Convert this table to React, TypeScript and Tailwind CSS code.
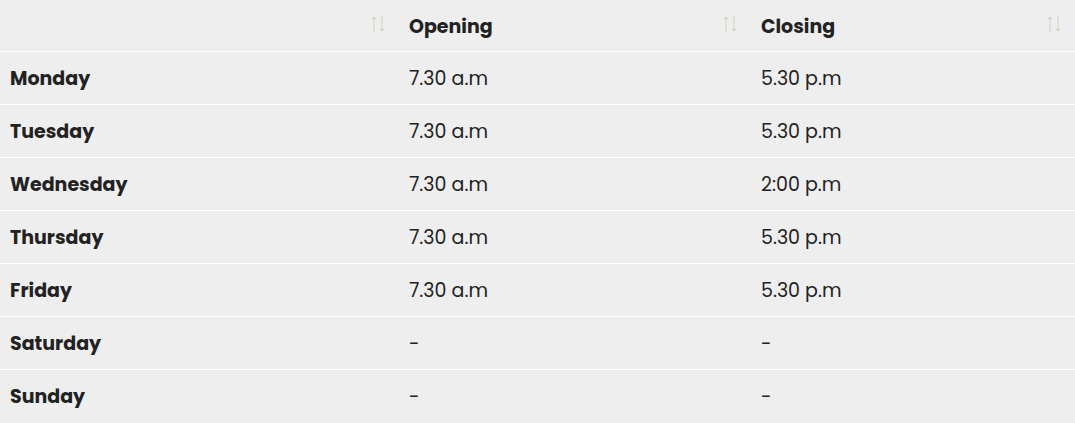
const rows = [
  { day: 'Monday', open: '7.30 a.m', close: '5.30 p.m' },
  { day: 'Tuesday', open: '7.30 a.m', close: '5.30 p.m' },
  { day: 'Wednesday', open: '7.30 a.m', close: '2:00 p.m' },
  { day: 'Thursday', open: '7.30 a.m', close: '5.30 p.m' },
  { day: 'Friday', open: '7.30 a.m', close: '5.30 p.m' },
  { day: 'Saturday', open: '-', close: '-' },
  { day: 'Sunday', open: '-', close: '-' },
];

// sort arrows in the header cells
function SortIcon() {
  return (
    <svg width="16" height="18" viewBox="0 0 16 18" fill="none" className="shrink-0 -mt-[6px]">
      <path d="M4 17V2M1.5 4.5L4 2l2.5 2.5" stroke="#d8d6c8" strokeWidth="1.2" />
      <path d="M12 1v15M9.5 13.5L12 16l2.5-2.5" stroke="#d8d6c8" strokeWidth="1.2" />
    </svg>
  );
}

function HeadCell({ label }: { label: string }) {
  return (
    <th className="h-[51px] px-[10px] pt-[3px] text-left font-bold">
      <div className="flex items-center justify-between pr-[3px]">
        <span>{label}</span>
        <SortIcon />
      </div>
    </th>
  );
}

export default function App() {
  return (
    <div className="w-[1075px] h-[423px] bg-[#eeeeee] text-[#222222] font-['Poppins','Open_Sans',sans-serif] text-[19px]">
      <table className="w-full table-fixed border-collapse">
        <colgroup>
          <col className="w-[399px]" />
          <col className="w-[352px]" />
          <col />
        </colgroup>
        <thead>
          <tr className="border-b border-white">
            <HeadCell label="" />
            <HeadCell label="Opening" />
            <HeadCell label="Closing" />
          </tr>
        </thead>
        <tbody>
          {rows.map((r, i) => (
            <tr key={r.day} className={i < rows.length - 1 ? 'border-b border-white' : ''}>
              <td className="h-[53px] px-[10px] pt-[3px] font-bold">{r.day}</td>
              <td className="h-[53px] px-[10px] pt-[3px]">{r.open}</td>
              <td className="h-[53px] px-[10px] pt-[3px]">{r.close}</td>
            </tr>
          ))}
        </tbody>
      </table>
    </div>
  );
}
